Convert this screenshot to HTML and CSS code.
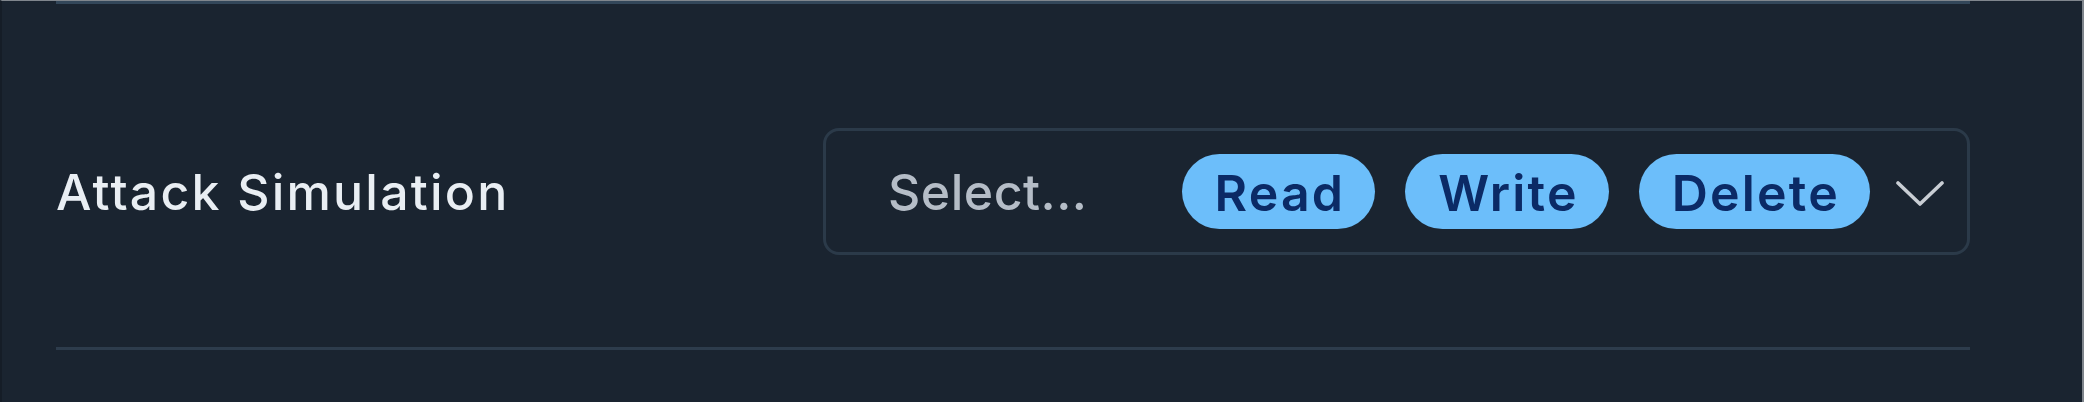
FILE: index.html
```html
<!DOCTYPE html>
<html lang="en">
<head>
<meta charset="utf-8">
<title>Attack Simulation</title>
<link rel="stylesheet" href="styles.css">
</head>
<body>
<div class="frame">
  <div class="list">
    <div class="row">
      <div class="label">Attack Simulation</div>
      <div class="select">
        <span class="placeholder">Select...</span>
        <div class="chips">
          <span class="chip">Read</span>
          <span class="chip">Write</span>
          <span class="chip">Delete</span>
        </div>
        <svg class="chevron" width="48" height="26" viewBox="0 0 48 26" aria-hidden="true">
          <polyline points="2,2 24,23 46,2" fill="none" stroke="#c9ced4" stroke-width="3.6" stroke-linecap="round" stroke-linejoin="round"/>
        </svg>
      </div>
    </div>
  </div>
</div>
</body>
</html>
```
FILE: styles.css
```css
html, body {
  margin: 0;
  padding: 0;
  background: #1a2430;
}
body {
  font-family: Inter, "Liberation Sans", sans-serif;
  -webkit-font-smoothing: antialiased;
}
.frame {
  box-sizing: border-box;
  height: 402px;
  border-top: 1px solid #80868d;
  border-right: 2px solid #7f858c;
  border-left: 2px solid #151d27;
  background: #1a2430;
}
.list {
  margin: 0 112px 0 54px;
  border-top: 3px solid #33475a;
}
.row {
  display: grid;
  grid-template-columns: 767px 1fr;
  align-items: center;
  padding: 124px 0 92px;
  border-bottom: 3px solid #2d3c4c;
}
.label {
  color: #e9eef3;
  font-size: 50px;
  font-weight: 500;
  letter-spacing: 2.2px;
}
.select {
  box-sizing: border-box;
  height: 127px;
  border: 3px solid #2b3a49;
  border-radius: 16px;
  display: flex;
  align-items: center;
  padding: 0 23px 0 62px;
}
.placeholder {
  color: #b5bdc7;
  font-size: 50px;
  font-weight: 500;
  letter-spacing: 0.5px;
  margin-right: 94px;
}
.chips {
  display: flex;
  align-items: center;
  gap: 30px;
}
.chip {
  display: flex;
  align-items: center;
  height: 75px;
  padding: 2px 30px 0 33px;
  box-sizing: border-box;
  border-radius: 38px;
  background: #6cbefa;
  color: #0b2a66;
  font-size: 50px;
  font-weight: 600;
  letter-spacing: 2.2px;
}
.chevron {
  margin-left: auto;
  margin-top: 4px;
  display: block;
}
```
